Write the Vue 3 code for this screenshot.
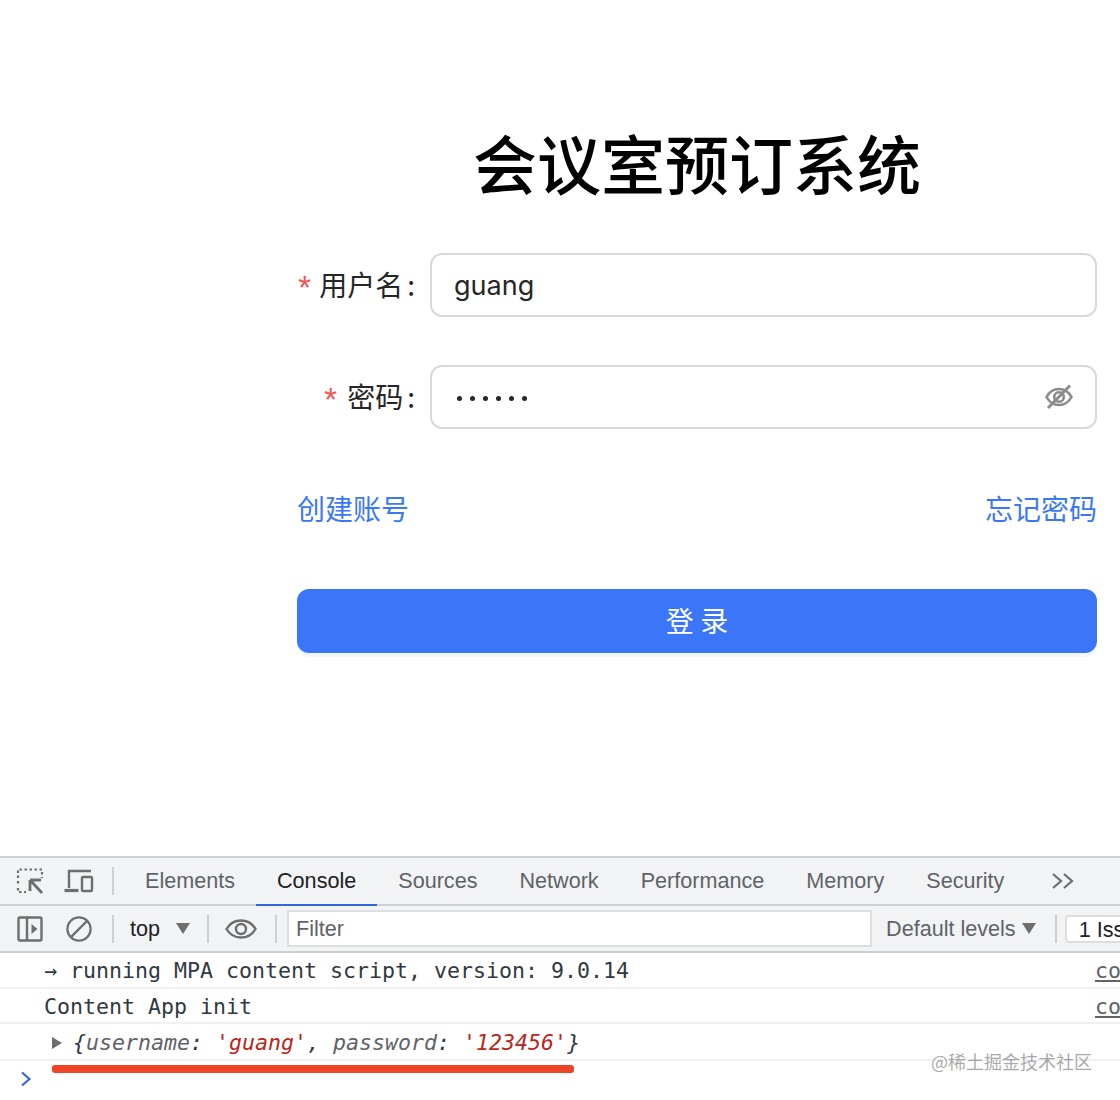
<script setup>
const tabs = ['Elements', 'Console', 'Sources', 'Network', 'Performance', 'Memory', 'Security']
</script>

<template>
  <div class="page">
    <main class="login">
      <div class="form">
        <h1 class="title">会议室预订系统</h1>
        <div class="row">
          <label class="label"><span class="star">*</span>用户名<span class="colon">:</span></label>
          <div class="input"><span class="value">guang</span></div>
        </div>
        <div class="row">
          <label class="label"><span class="star wide">*</span>密码<span class="colon">:</span></label>
          <div class="input">
            <span class="dots"><i v-for="n in 6" :key="n"></i></span>
            <svg class="eye-off" width="28" height="28" viewBox="0 0 28 28" fill="none" stroke="#8c8c8c" stroke-width="2.600">
              <path d="M1.500 14c3-5.500 7-8 12.500-8s9.500 2.500 12.500 8c-3 5.500-7 8-12.500 8s-9.500-2.500-12.500-8z" />
              <circle cx="14" cy="14" r="4.800" />
              <path d="M25 2.500 3 25" stroke-width="3" />
            </svg>
          </div>
        </div>
        <div class="links">
          <a>创建账号</a>
          <a>忘记密码</a>
        </div>
        <button class="submit">登 录</button>
      </div>
    </main>

    <section class="devtools">
      <div class="tabbar">
        <svg class="ico first" width="28" height="28" viewBox="0 0 28 28" fill="none" stroke="#6e6e6e" stroke-width="2.200">
          <path d="M2 11V2.500h24V11M2 14v4M2 21v4h8" stroke-dasharray="2.500 2.500" />
          <path d="M14 13h11M14 13v11M14.500 13.500 26 26" stroke-width="2.800" />
        </svg>
        <svg class="ico second" width="30" height="26" viewBox="0 0 30 26" fill="none" stroke="#6e6e6e" stroke-width="2.400">
          <path d="M5 20V3h22" />
          <path d="M0.500 22.500h14" stroke-width="3.200" />
          <rect x="18" y="9" width="10" height="14" rx="1" />
        </svg>
        <span class="sep tab-sep"></span>
        <div class="tabs">
          <span v-for="t in tabs" :key="t" class="tab" :class="{ active: t === 'Console' }">{{ t }}</span>
        </div>
        <svg class="more" width="24" height="18" viewBox="0 0 24 18" fill="none" stroke="#6e6e6e" stroke-width="2.200">
          <path d="M2 2l8 7-8 7M13 2l8 7-8 7" />
        </svg>
      </div>

      <div class="toolbar">
        <svg class="ico" width="26" height="26" viewBox="0 0 26 26" fill="none" stroke="#6e6e6e" stroke-width="2.400">
          <rect x="1.500" y="1.500" width="23" height="23" rx="1.500" />
          <path d="M10 2v22" />
          <path d="M14.500 8l6 5-6 5z" fill="#6e6e6e" stroke="none" />
        </svg>
        <svg class="ico block" width="26" height="26" viewBox="0 0 28 28" fill="none" stroke="#6e6e6e" stroke-width="2.400">
          <circle cx="14" cy="14" r="12.500" />
          <path d="M5 23 23 5" />
        </svg>
        <span class="sep s1"></span>
        <span class="top">top</span>
        <span class="tri t1"></span>
        <span class="sep s2"></span>
        <svg class="ico eye" width="32" height="20" viewBox="0 0 32 20" fill="none" stroke="#6e6e6e" stroke-width="2.400">
          <path d="M1.500 10C5 4 10 1.500 16 1.500S27 4 30.500 10C27 16 22 18.500 16 18.500S5 16 1.500 10z" />
          <circle cx="16" cy="10" r="5" />
        </svg>
        <span class="sep s3"></span>
        <div class="filter">Filter</div>
        <span class="levels">Default levels</span>
        <span class="tri t2"></span>
        <span class="sep s4"></span>
        <span class="issues">1 Issue</span>
      </div>

      <div class="console">
        <div class="line first-line">
          <span class="msg"><span class="arrow">→</span> running MPA content script, version: 9.0.14</span>
          <span class="src">co</span>
        </div>
        <div class="line second-line">
          <span class="msg">Content App init</span>
          <span class="src">co</span>
        </div>
        <div class="line obj">
          <span class="caret"></span>
          <span class="msg it">{<span class="k">username</span>: <span class="v">'guang'</span>, <span class="k">password</span>: <span class="v">'123456'</span>}</span>
        </div>
        <div class="prompt">
          <svg width="12" height="16" viewBox="0 0 12 16" fill="none" stroke="#2f66e0" stroke-width="2.200">
            <path d="M2 1.500 9.500 8 2 14.500" />
          </svg>
        </div>
      </div>

      <div class="redline"></div>
      <div class="watermark">@稀土掘金技术社区</div>
    </section>
  </div>
</template>

<style>
html, body { margin: 0; background: #fff; }
</style>

<style scoped>
.page {
  width: 1120px;
  height: 1100px;
  overflow: hidden;
  display: flex;
  flex-direction: column;
  font-family: "Inter", "Noto Sans CJK SC", sans-serif;
}
.login {
  height: 856px;
  flex: none;
  padding-top: 116px;
  padding-left: 297px;
  box-sizing: border-box;
}
.form { width: 800px; }
.title {
  margin: 0 0 47px;
  font: 500 64px/90px "Noto Sans CJK SC", sans-serif;
  color: #000;
  text-align: center;
}
.row {
  display: grid;
  grid-template-columns: 133px 1fr;
  margin-bottom: 48px;
  height: 64px;
}
.label {
  display: flex;
  align-items: center;
  justify-content: flex-end;
  padding-bottom: 2px;
  font: 400 28px/62px "Noto Sans CJK SC", sans-serif;
  color: #262626;
}
.star {
  color: #f25555;
  margin-right: 8px;
  position: relative;
  top: 4px;
  font-family: "Liberation Sans", sans-serif;
  font-size: 33px;
}
.star.wide { margin-right: 10px; }
.colon { margin: 0 15px 0 4px; }
.input {
  display: flex;
  align-items: center;
  justify-content: space-between;
  border: 2px solid #d9d9d9;
  border-radius: 12px;
  padding: 0 22px 0 22px;
  box-sizing: border-box;
}
.value { font-size: 27px; color: #262626; }
.dots { display: flex; gap: 8px; margin-left: 3px; padding-top: 3px; }
.dots i { width: 5px; height: 5px; border-radius: 50%; background: #262626; }
.links {
  display: flex;
  justify-content: space-between;
  align-items: center;
  height: 64px;
  padding-bottom: 2px;
  box-sizing: border-box;
  margin-bottom: 48px;
  font: 400 28px/62px "Noto Sans CJK SC", sans-serif;
  color: #3b78f8;
}
.submit {
  display: block;
  width: 800px;
  height: 64px;
  border: 0;
  border-radius: 12px;
  background: #3a76f7;
  color: #fff;
  font: 400 28px/60px "Noto Sans CJK SC", sans-serif;
  box-shadow: 0 4px 0 rgba(5, 95, 255, 0.05);
  padding: 0 0 2px;
}

.devtools {
  position: relative;
  flex: 1;
  border-top: 2px solid #cfd1d4;
  box-sizing: border-box;
  font-family: "Liberation Sans", sans-serif;
  background: #fff;
}
.tabbar, .toolbar {
  display: flex;
  align-items: center;
  background: #f1f3f4;
  border-bottom: 2px solid #cdcfd2;
  box-sizing: border-box;
}
.tabbar { height: 48px; padding-left: 16px; }
.toolbar { height: 47px; padding-left: 17px; font-size: 21.600px; color: #5f6368; }
.ico { flex: none; display: block; }
.second { margin-left: 20px; }
.sep { flex: none; width: 2px; height: 28px; background: #cdcfd2; }
.tab-sep { margin-left: 18px; }
.tabs { display: flex; height: 100%; margin-left: 10px; }
.tab {
  padding: 0 21px;
  font-size: 21.600px;
  line-height: 46px;
  color: #5f6368;
  white-space: nowrap;
  height: 100%;
  box-sizing: border-box;
}
.tab.active {
  color: #202124;
  border-bottom: 2px solid #2f66e0;
  margin-bottom: -2px;
  height: calc(100% + 2px);
}
.more { margin-left: 26px; flex: none; }
.block { margin-left: 23px; }
.s1 { margin-left: 20px; }
.top { margin-left: 16px; color: #202124; }
.tri { flex: none; width: 0; height: 0; border-left: 7px solid transparent; border-right: 7px solid transparent; border-top: 11px solid #6e6e6e; }
.t1 { margin-left: 16px; }
.s2 { margin-left: 17px; }
.eye { margin-left: 16px; }
.s3 { margin-left: 18px; }
.filter {
  flex: none;
  width: 585px;
  height: 37px;
  margin-left: 10px;
  box-sizing: border-box;
  background: #fff;
  border: 2px solid #dcdee0;
  padding-left: 7px;
  line-height: 33px;
}
.levels { margin-left: 14px; white-space: nowrap; }
.t2 { margin-left: 6px; }
.s4 { margin-left: 19px; }
.issues {
  flex: none;
  margin-left: 8px;
  padding-left: 12px;
  height: 28px;
  width: 80px;
  line-height: 26px;
  box-sizing: border-box;
  border: 2px solid #dcdee0;
  border-right: 0;
  border-radius: 4px 0 0 4px;
  background: #fff;
  color: #202124;
  white-space: nowrap;
  overflow: hidden;
}
.console {
  font: 21.600px/34px "DejaVu Sans Mono", monospace;
  color: #303942;
}
.line {
  display: flex;
  align-items: center;
  border-bottom: 2px solid #f0f0f0;
  box-sizing: border-box;
  padding-left: 44px;
  padding-top: 2px;
  white-space: pre;
}
.first-line { height: 36px; }
.second-line { height: 35px; }
.obj { height: 37px; padding-left: 52px; padding-top: 2px; }
.msg { flex: 1; }
.src { width: 25px; overflow: hidden; color: #5f6368; text-decoration: underline; }
.caret {
  flex: none;
  width: 0;
  height: 0;
  border-top: 6px solid transparent;
  border-bottom: 6px solid transparent;
  border-left: 10px solid #6e6e6e;
  margin-right: 11px;
}
.it { font-style: italic; color: #303942; }
.k { color: #5f6368; }
.v { color: #b8261c; }
.prompt { height: 36px; padding-left: 20px; display: flex; align-items: center; }
.redline {
  position: absolute;
  left: 52px;
  top: 207px;
  width: 522px;
  height: 8px;
  border-radius: 3px;
  background: #ee4326;
}
.watermark {
  position: absolute;
  left: 931px;
  top: 189px;
  font: 400 18px/28px "Noto Sans CJK SC", sans-serif;
  color: rgba(110, 110, 110, 0.6);
  white-space: nowrap;
}
</style>
